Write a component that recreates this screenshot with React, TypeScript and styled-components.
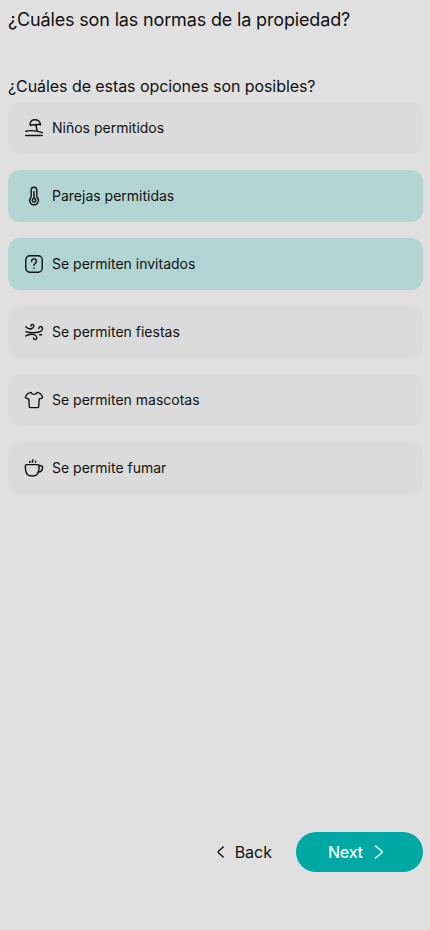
import React, { useState } from 'react';
import styled, { createGlobalStyle } from 'styled-components';

const GlobalStyle = createGlobalStyle`
  * { box-sizing: border-box; }
  body {
    margin: 0;
    background: #e0e0e0;
    color: #111;
    font-family: Inter, 'Liberation Sans', sans-serif;
  }
`;

const Page = styled.main`
  display: flex;
  flex-direction: column;
  height: 930px;
  padding: 6px 7px 58px 8px;
`;

const Title = styled.h1`
  margin: 0 0 43px;
  font-size: 18px;
  font-weight: 400;
  line-height: 28px;
  letter-spacing: -0.155px;
`;

const Question = styled.h2`
  margin: 0 0 7px;
  font-size: 16px;
  font-weight: 400;
  line-height: 18px;
  height: 18px;
  letter-spacing: -0.07px;
`;

const Options = styled.div`
  display: flex;
  flex-direction: column;
  gap: 16px;
`;

const Option = styled.button<{ $selected: boolean }>`
  display: flex;
  align-items: center;
  gap: 8px;
  height: 52px;
  padding: 0 16px;
  border: 0;
  border-radius: 12px;
  background: ${(p) => (p.$selected ? '#b2d5d4' : '#dbdbdb')};
  color: #111;
  font: 400 14px/20px Inter, 'Liberation Sans', sans-serif;
  text-align: left;
  cursor: pointer;
`;

const Icon = styled.svg`
  width: 20px;
  height: 20px;
  flex: none;
  fill: none;
  stroke: currentColor;
  stroke-width: 1.4;
  stroke-linecap: round;
  stroke-linejoin: round;
`;

const Footer = styled.footer`
  display: flex;
  justify-content: flex-end;
  gap: 24px;
  margin-top: auto;
`;

const NavButton = styled.button<{ $primary?: boolean }>`
  display: flex;
  align-items: center;
  gap: ${(p) => (p.$primary ? 6 : 4)}px;
  height: 40px;
  width: ${(p) => (p.$primary ? '127px' : 'auto')};
  padding: 0 0 0 ${(p) => (p.$primary ? 32 : 0)}px;
  border: 0;
  border-radius: 20px;
  background: ${(p) => (p.$primary ? '#00a8a5' : 'transparent')};
  color: ${(p) => (p.$primary ? '#effafa' : '#111')};
  font: ${(p) => (p.$primary ? 500 : 400)} 16px/24px Inter, 'Liberation Sans', sans-serif;
  letter-spacing: ${(p) => (p.$primary ? '-0.25px' : 'normal')};
  cursor: pointer;
`;

const options = [
  {
    label: 'Niños permitidos',
    icon: (
      <>
        <path d="M1.7 17.5h16.6M1.7 13.2c4.8-.9 11.3-.5 16.6 1.5" />
        <path d="M6.5 7.5C5.3 4.8 7 2.3 10 1.8c3.6-.6 6.3 1.5 6.6 5.1-1.3-.8-2.4-.8-3.4 0-1-.6-2-.5-3 .3-1.3-.6-2.5-.5-3.7.3zM11.9 7.2l1.3 5.8" />
      </>
    ),
  },
  {
    label: 'Parejas permitidas',
    icon: (
      <>
        <path d="M7.2 4a2.8 2.8 0 0 1 5.6 0v7a4.4 4.4 0 1 1-5.6 0z" />
        <circle cx="10" cy="14.3" r="1.8" />
        <path d="M10 5.6v6.9" />
      </>
    ),
  },
  {
    label: 'Se permiten invitados',
    icon: (
      <>
        <rect x="1.8" y="1.8" width="16.4" height="16.4" rx="4" />
        <path d="M7.6 7.6c0-1.7 1-2.7 2.4-2.7s2.4 1 2.4 2.5c0 1.7-2.4 2-2.4 4M10 14v.2" />
      </>
    ),
  },
  {
    label: 'Se permiten fiestas',
    icon: (
      <>
        <path d="M1.8 4.8c2 2 4.1 2.6 6 1.7 2.1-.9 2.7-3 1.5-3.8C8.1 1.9 6.7 2.8 7 4" />
        <path d="M1.8 9.6c3.4 1.1 8.2 1.5 12.2.7 3.7-.7 5.1-3 4.3-4.7-.8-1.8-3.8-1.3-3.5 1" />
        <path d="M1.8 14c2.2-1.6 5.2-2.2 8.3-1.3 3.2.9 3.4 4.4 1.1 4.8-1.2.2-1.9-.7-1.8-1.6M15.6 12.7h2.1" />
      </>
    ),
  },
  {
    label: 'Se permiten mascotas',
    icon: (
      <path d="M7.1 2.4c.5 1.4 1.6 2 2.9 2s2.4-.6 2.9-2c2.7.4 4.9 1.8 5.7 5.1-.5.9-1.5 1.3-3.2 1.1-.5 2-.7 4.5-.5 7.4 0 .9-.6 1.6-1.6 1.6H6.7c-1 0-1.6-.7-1.6-1.6.2-2.9 0-5.4-.5-7.4-1.7.2-2.7-.2-3.2-1.1.8-3.3 3-4.7 5.7-5.1z" />
    ),
  },
  {
    label: 'Se permite fumar',
    icon: (
      <>
        <path d="M2.1 6.6h12.1c.5 0 .8.3.8.8v2.8c0 5.2-2.5 7.8-6.8 7.8s-6.8-2.6-6.8-7.8V7.4c0-.5.3-.8.7-.8z" />
        <path d="M15 7.8h1.7c1.2 0 2.1.8 1.9 2-.3 2.6-2 4.1-4.3 4.3M5.6 4.4l.5-1.1M8.2 4.3l.8-2.5M11.3 4.4l.5-1.1" />
      </>
    ),
  },
];

export default function App() {
  const [selected, setSelected] = useState([1, 2]);
  const toggle = (index: number) =>
    setSelected((current) =>
      current.includes(index) ? current.filter((i) => i !== index) : [...current, index],
    );

  return (
    <>
      <GlobalStyle />
      <Page>
        <Title>¿Cuáles son las normas de la propiedad?</Title>
        <Question>¿Cuáles de estas opciones son posibles?</Question>
        <Options>
          {options.map((option, index) => (
            <Option
              key={option.label}
              $selected={selected.includes(index)}
              aria-pressed={selected.includes(index)}
              onClick={() => toggle(index)}
            >
              <Icon viewBox="0 0 20 20">{option.icon}</Icon>
              {option.label}
            </Option>
          ))}
        </Options>
        <Footer>
          <NavButton>
            <Icon viewBox="0 0 20 20"><path d="M12.2 5 7.5 9.2Q6.7 10 7.5 10.8L12.2 15" /></Icon>
            Back
          </NavButton>
          <NavButton $primary>
            Next
            <Icon viewBox="0 0 20 20"><path d="m6.4 3.9 6.3 5.4q.8.7 0 1.4l-6.3 5.4" /></Icon>
          </NavButton>
        </Footer>
      </Page>
    </>
  );
}
